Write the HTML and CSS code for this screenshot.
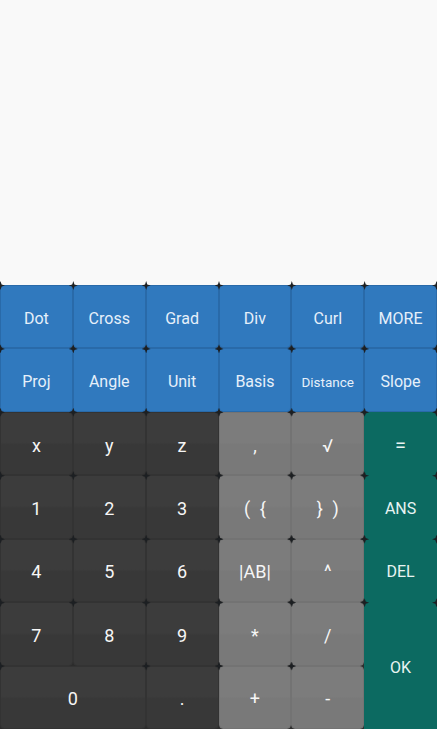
FILE: index.html
```html
<!DOCTYPE html>
<html>
<head>
<meta charset="utf-8">
<link rel="stylesheet" href="styles.css">
</head>
<body>
<div class="screen">
  <div class="display"></div>

  <div class="keypad">
    <!-- vector functions -->
    <div class="key fn">Dot</div>
    <div class="key fn">Cross</div>
    <div class="key fn">Grad</div>
    <div class="key fn">Div</div>
    <div class="key fn">Curl</div>
    <div class="key fn edge">MORE</div>

    <div class="key fn">Proj</div>
    <div class="key fn">Angle</div>
    <div class="key fn">Unit</div>
    <div class="key fn">Basis</div>
    <div class="key fn small">Distance</div>
    <div class="key fn edge">Slope</div>

    <!-- input -->
    <div class="key num">x</div>
    <div class="key num">y</div>
    <div class="key num">z</div>
    <div class="key op">,</div>
    <div class="key op">&radic;</div>
    <div class="key act edge big">=</div>

    <div class="key num">1</div>
    <div class="key num">2</div>
    <div class="key num">3</div>
    <div class="key op">( {</div>
    <div class="key op">} )</div>
    <div class="key act edge">ANS</div>

    <div class="key num">4</div>
    <div class="key num">5</div>
    <div class="key num">6</div>
    <div class="key op">|AB|</div>
    <div class="key op">^</div>
    <div class="key act edge">DEL</div>

    <div class="key num">7</div>
    <div class="key num">8</div>
    <div class="key num">9</div>
    <div class="key op">*</div>
    <div class="key op">/</div>
    <div class="key act edge tall">OK</div>

    <div class="key num wide">0</div>
    <div class="key num">.</div>
    <div class="key op">+</div>
    <div class="key op">-</div>
  </div>
</div>
</body>
</html>
```

FILE: styles.css
```css
html, body {
    margin: 0;
    padding: 0;
}
body {
    background: #f9f9f9;
    font-family: Roboto, "Liberation Sans", Arial, sans-serif;
}

.screen {
    display: flex;
    flex-direction: column;
    width: 437px;
    height: 729px;
    overflow: hidden;
}
.display {
    flex: 1;
    background: #f9f9f9;
}

.keypad {
    height: 444px;
    display: grid;
    grid-template-columns: repeat(6, 1fr);
    grid-template-rows: repeat(7, 1fr);
    background: #2c2c2c;
}

.key {
    position: relative;
    display: flex;
    align-items: center;
    justify-content: center;
    padding-top: 3px;
    border: 1px solid rgba(0,0,0,0.1);
    border-radius: 4px;
    color: #f6f6f6;
    font-size: 18px;
}
/* little four point stars at the corners */
.key::before,
.edge::after {
    content: "";
    position: absolute;
    top: -5px;
    left: -5px;
    width: 9px;
    height: 9px;
    background: #1c1f22;
    clip-path: polygon(50% 0, 62% 38%, 100% 50%, 62% 62%, 50% 100%, 38% 62%, 0 50%, 38% 38%);
    z-index: 2;
}
.edge::after {
    left: auto;
    right: -5px;
}

.fn {
    background: #3079be;
    border-color: rgba(10,40,80,0.18);
    color: #e6f0fa;
    font-size: 16px;
}
.fn.small {
    font-size: 13.5px;
}

.num {
    background: linear-gradient(#3c3c3c 0, #3c3c3c 48%, #383838 52%, #383838 100%);
    border-color: #333;
}
.op {
    background: linear-gradient(#7c7c7c 0, #7c7c7c 48%, #797979 52%, #797979 100%);
    border-color: #737373;
    word-spacing: 5px;
}
.act {
    background: #0c6a61;
    border-color: #0c6a61;
    border-radius: 0;
    font-size: 16px;
    color: #e8f4f2;
}
.act.big {
    font-size: 20px;
}

.wide {
    grid-column: span 2;
}
.tall {
    grid-row: span 2;
}
```
